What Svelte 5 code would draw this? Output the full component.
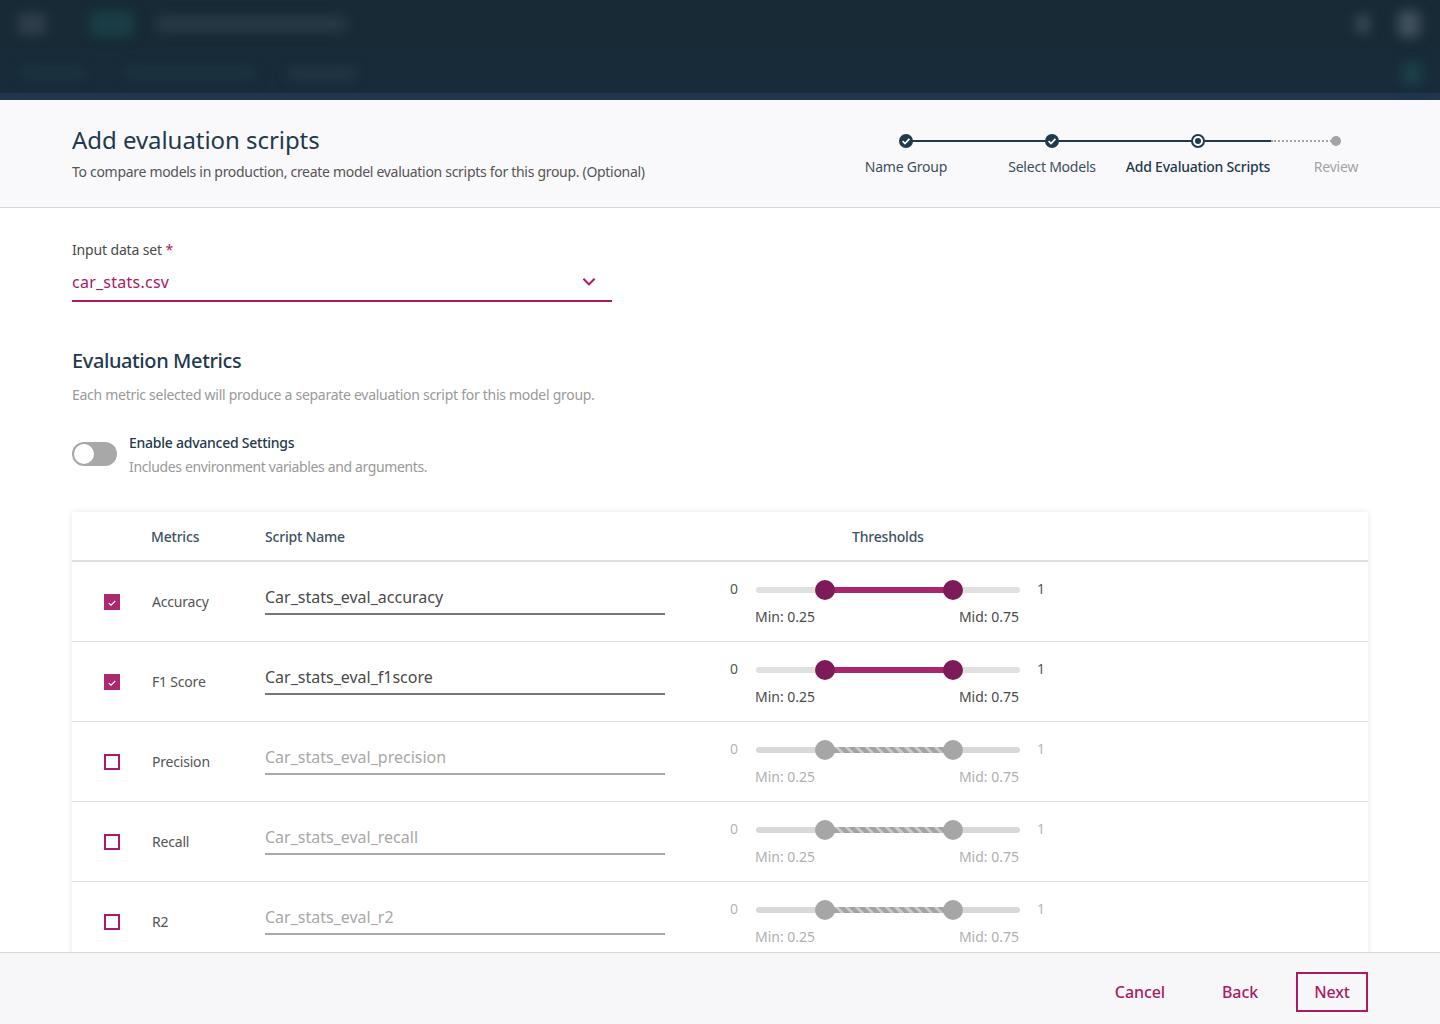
<script>
  const steps = [
    { label: 'Name Group', state: 'done' },
    { label: 'Select Models', state: 'done' },
    { label: 'Add Evaluation Scripts', state: 'current' },
    { label: 'Review', state: 'todo' }
  ];
  const rows = [
    { metric: 'Accuracy', script: 'Car_stats_eval_accuracy', on: true },
    { metric: 'F1 Score', script: 'Car_stats_eval_f1score', on: true },
    { metric: 'Precision', script: 'Car_stats_eval_precision', on: false },
    { metric: 'Recall', script: 'Car_stats_eval_recall', on: false },
    { metric: 'R2', script: 'Car_stats_eval_r2', on: false }
  ];
  const lo = 26.1;
  const hi = 74.6;
</script>

<div class="page">
  <header class="top">
    <div class="top-row first">
      <span class="blob menu"></span>
      <span class="blob logo"></span>
      <span class="blob title"></span>
      <span class="grow"></span>
      <span class="blob bell"></span>
      <span class="blob user"></span>
    </div>
    <div class="top-row second">
      <span class="blob crumb a"></span>
      <span class="blob crumb b"></span>
      <span class="blob crumb c"></span>
      <span class="grow"></span>
      <span class="blob help"></span>
    </div>
    <div class="strip"></div>
  </header>

  <section class="intro">
    <div class="intro-text">
      <h1>Add evaluation scripts</h1>
      <p>To compare models in production, create model evaluation scripts for this group. (Optional)</p>
    </div>
    <ol class="stepper">
      {#each steps as s}
        <li class="step {s.state}">
          <span class="dot">
            {#if s.state === 'done'}
              <svg width="10" height="10" viewBox="0 0 10 10"><path d="M1.6 5.2 4 7.5 8.4 2.9" fill="none" stroke="#fff" stroke-width="1.7" /></svg>
            {/if}
          </span>
          <span class="step-label">{s.label}</span>
        </li>
      {/each}
    </ol>
  </section>

  <main class="main">
    <div class="field">
      <label class="field-label" for="ds">Input data set <span class="req">*</span></label>
      <div class="select" id="ds">
        <span>car_stats.csv</span>
        <svg width="16" height="16" viewBox="0 0 16 16"><path d="M2.4 4.8 8 10.4 13.6 4.8" fill="none" stroke="#aa1a62" stroke-width="2" /></svg>
      </div>
    </div>

    <h2>Evaluation Metrics</h2>
    <p class="desc">Each metric selected will produce a separate evaluation script for this model group.</p>

    <div class="adv">
      <span class="toggle"><span class="toggle-knob"></span></span>
      <div class="adv-text">
        <div class="adv-title">Enable advanced Settings</div>
        <div class="adv-sub">Includes environment variables and arguments.</div>
      </div>
    </div>

    <div class="table">
      <div class="thead">
        <span class="th metrics">Metrics</span>
        <span class="th script">Script Name</span>
        <span class="th thresholds">Thresholds</span>
      </div>
      {#each rows as r}
        <div class="row" class:off={!r.on}>
          <span class="check">
            {#if r.on}
              <svg width="16" height="16" viewBox="0 0 16 16"><path d="M4.8 8.1 7 10.2 11.2 6" fill="none" stroke="#fff" stroke-width="1.1" /></svg>
            {/if}
          </span>
          <span class="metric">{r.metric}</span>
          <div class="script-input">{r.script}</div>
          <div class="slider">
            <div class="slider-top">
              <span class="end">0</span>
              <div class="track">
                <span class="fill" style="left:{lo}%;width:{hi - lo}%"></span>
                <span class="knob" style="left:{lo}%"></span>
                <span class="knob" style="left:{hi}%"></span>
              </div>
              <span class="end">1</span>
            </div>
            <div class="values">
              <span>Min: 0.25</span>
              <span>Mid: 0.75</span>
            </div>
          </div>
        </div>
      {/each}
    </div>
  </main>

  <footer class="foot">
    <button class="btn">Cancel</button>
    <button class="btn">Back</button>
    <button class="btn primary">Next</button>
  </footer>
</div>

<style>
  :global(body) {
    margin: 0;
    font-family: "Noto Sans", "Open Sans", sans-serif;
    color: #555;
    background: #fff;
  }
  .page {
    height: 1024px;
    display: flex;
    flex-direction: column;
    overflow: hidden;
  }
  .top {
    height: 100px;
    flex: none;
    background: #172a36;
    display: flex;
    flex-direction: column;
    overflow: hidden;
  }
  .top-row {
    display: flex;
    align-items: center;
  }
  .first { height: 48px; padding: 0 20px 0 18px; }
  .second { height: 45px; padding: 6px 18px 0 20px; background: #172b39; box-sizing: border-box; }
  .strip { height: 7px; background: #1f364c; }
  .grow { flex: 1; }
  .blob { display: block; filter: blur(6px); border-radius: 3px; }
  .menu { width: 28px; height: 22px; background: #2f3e4a; }
  .logo { width: 44px; height: 26px; margin-left: 44px; background: #1a3e45; }
  .title { width: 190px; height: 14px; margin-left: 22px; background: #2b3c49; }
  .bell { width: 14px; height: 18px; background: #394a56; }
  .user { width: 22px; height: 26px; margin-left: 28px; margin-right: 0; background: #41515d; }
  .crumb { height: 11px; }
  .crumb.a { width: 66px; background: #1c3540; }
  .crumb.b { width: 132px; margin-left: 38px; background: #1c3540; }
  .crumb.c { width: 68px; margin-left: 32px; background: #243845; }
  .help { width: 20px; height: 22px; background: #1c4148; }

  .intro {
    height: 108px;
    flex: none;
    box-sizing: border-box;
    background: #f9f9fb;
    border-bottom: 1px solid #d8d8d8;
    padding: 0 39px 0 72px;
    display: flex;
    justify-content: space-between;
  }
  h1 {
    margin: 24px 0 0;
    font-size: 24px;
    line-height: 32px;
    font-weight: 400;
    letter-spacing: -0.05px;
    color: #1f3a4d;
  }
  .intro p {
    margin: 8px 0 0;
    font-size: 14px;
    line-height: 16px;
    letter-spacing: -0.3px;
    color: #555;
  }
  .stepper {
    list-style: none;
    margin: 34px 0 0;
    padding: 0;
    display: flex;
  }
  .step {
    position: relative;
    width: 146px;
    display: flex;
    flex-direction: column;
    align-items: center;
  }
  .step:last-child { width: 130px; }
  .step::after {
    content: "";
    position: absolute;
    top: 6px;
    left: 0;
    right: 0;
    height: 2px;
    background: #1f3a4d;
  }
  .step:first-child::after { left: 50%; }
  .step:last-child::after {
    right: 50%;
    height: 0;
    background: none;
    border-top: 2px dotted #a3a3a3;
  }
  .dot {
    position: relative;
    z-index: 1;
    box-sizing: border-box;
    width: 14px;
    height: 14px;
    border-radius: 50%;
    background: #1f3a4d;
    display: flex;
    align-items: center;
    justify-content: center;
  }
  .current .dot {
    background: #fff;
    border: 2px solid #1f3a4d;
  }
  .current .dot::after {
    content: "";
    width: 6px;
    height: 6px;
    border-radius: 50%;
    background: #1f3a4d;
  }
  .todo .dot { width: 10px; height: 10px; margin-top: 2px; background: #a3a3a3; margin-bottom: 2px; }
  .step-label {
    margin-top: 11px;
    font-size: 14px;
    line-height: 16px;
    letter-spacing: -0.22px;
    color: #3d4f5c;
    white-space: nowrap;
  }
  .current .step-label { font-weight: 500; color: #1f3a4d; }
  .todo .step-label { color: #a3a3a3; }

  .main {
    flex: 1;
    min-height: 0;
    overflow: hidden;
    padding: 0 72px;
  }
  .field { width: 540px; margin-top: 34px; }
  .field-label {
    display: block;
    font-size: 14px;
    line-height: 16px;
    letter-spacing: -0.15px;
    color: #4a4a4a;
  }
  .req { color: #aa1a62; }
  .select {
    margin-top: 9px;
    height: 35px;
    box-sizing: border-box;
    border-bottom: 2px solid #aa1a62;
    display: flex;
    justify-content: space-between;
    align-items: center;
    padding: 0 15px 3px 0;
    font-size: 16px;
    letter-spacing: 0.25px;
    color: #aa1a62;
  }
  h2 {
    margin: 45px 0 0;
    font-size: 20px;
    line-height: 28px;
    font-weight: 500;
    letter-spacing: -0.4px;
    color: #1f3a4d;
  }
  .desc {
    margin: 12px 0 0;
    font-size: 14px;
    line-height: 16px;
    letter-spacing: -0.28px;
    color: #999;
  }
  .adv {
    margin-top: 32px;
    display: flex;
    gap: 12px;
  }
  .toggle {
    flex: none;
    width: 45px;
    height: 24px;
    margin-top: 7px;
    border-radius: 12px;
    background: #a8a8a8;
    display: flex;
    align-items: center;
    padding-left: 2px;
    box-sizing: border-box;
  }
  .toggle-knob {
    width: 20px;
    height: 20px;
    border-radius: 50%;
    background: #fff;
  }
  .adv-title {
    font-size: 14px;
    line-height: 16px;
    font-weight: 500;
    letter-spacing: -0.25px;
    color: #1f3a4d;
  }
  .adv-sub {
    margin-top: 8px;
    font-size: 14px;
    line-height: 16px;
    letter-spacing: -0.37px;
    color: #999;
  }
  .table {
    margin-top: 37px;
    background: #fff;
    box-shadow: 0 0 6px rgba(0, 0, 0, 0.1);
  }
  .thead {
    height: 50px;
    box-sizing: border-box;
    border-bottom: 2px solid #e0e0e0;
    display: flex;
    align-items: center;
    font-size: 14px;
    font-weight: 500;
    letter-spacing: -0.2px;
    color: #3d5263;
  }
  .metrics { margin-left: 79px; width: 114px; }
  .script { width: 400px; }
  .thresholds { margin-left: 187px; }
  .row {
    height: 80px;
    box-sizing: border-box;
    border-bottom: 1px solid #e0e0e0;
    display: flex;
    align-items: center;
  }
  .check {
    flex: none;
    box-sizing: border-box;
    width: 16px;
    height: 16px;
    margin-left: 32px;
    background: #aa2a6c;
    display: block;
  }
  .off .check {
    background: #fff;
    border: 2px solid #aa1a62;
  }
  .metric {
    flex: none;
    width: 113px;
    margin-left: 32px;
    font-size: 14px;
    letter-spacing: -0.2px;
    color: #555;
  }
  .script-input {
    flex: none;
    width: 400px;
    height: 32px;
    margin-top: -5px;
    padding-top: 2px;
    box-sizing: border-box;
    border-bottom: 2px solid #777;
    font-size: 16px;
    line-height: 24px;
    color: #4a4a4a;
  }
  .off .script-input {
    color: #a8a8a8;
    border-bottom-color: #a8a8a8;
  }
  .slider {
    flex: none;
    width: 316px;
    margin-left: 65px;
    margin-top: 3px;
  }
  .slider-top {
    height: 18px;
    display: flex;
    align-items: flex-start;
  }
  .end {
    width: 8px;
    font-size: 14px;
    line-height: 16px;
    color: #555;
  }
  .off .end { color: #b5b5b5; }
  .track {
    position: relative;
    width: 264px;
    height: 6px;
    margin: 6px 17px 0 18px;
    border-radius: 3px;
    background: #e0e0e0;
  }
  .off .track { background: #d8d8d8; }
  .fill {
    position: absolute;
    top: 0;
    height: 100%;
    background: #a8266c;
  }
  .off .fill {
    background: repeating-linear-gradient(45deg, #a3a3a3 0 4px, #c9c9c9 4px 7px);
  }
  .knob {
    position: absolute;
    top: 50%;
    width: 20px;
    height: 20px;
    border-radius: 50%;
    background: #7d1b5a;
    transform: translate(-50%, -50%);
  }
  .off .knob { background: #a6a6a6; }
  .values {
    margin: 10px 0 0 25px;
    width: 264px;
    display: flex;
    justify-content: space-between;
    font-size: 14px;
    line-height: 16px;
    color: #4a4a4a;
  }
  .off .values { color: #b0b0b0; }
  .foot {
    height: 72px;
    flex: none;
    box-sizing: border-box;
    background: #f7f7fa;
    border-top: 1px solid #d8d8d8;
    padding: 19px 72px 0 0;
    display: flex;
    justify-content: flex-end;
    align-items: flex-start;
  }
  .btn {
    height: 40px;
    background: none;
    border: 0;
    padding: 0;
    font: inherit;
    font-size: 16px;
    font-weight: 500;
    letter-spacing: -0.1px;
    color: #aa1a62;
    margin-left: 57px;
  }
  .primary {
    width: 72px;
    margin-left: 38px;
    border: 2px solid #aa1a62;
    box-sizing: border-box;
  }
</style>
